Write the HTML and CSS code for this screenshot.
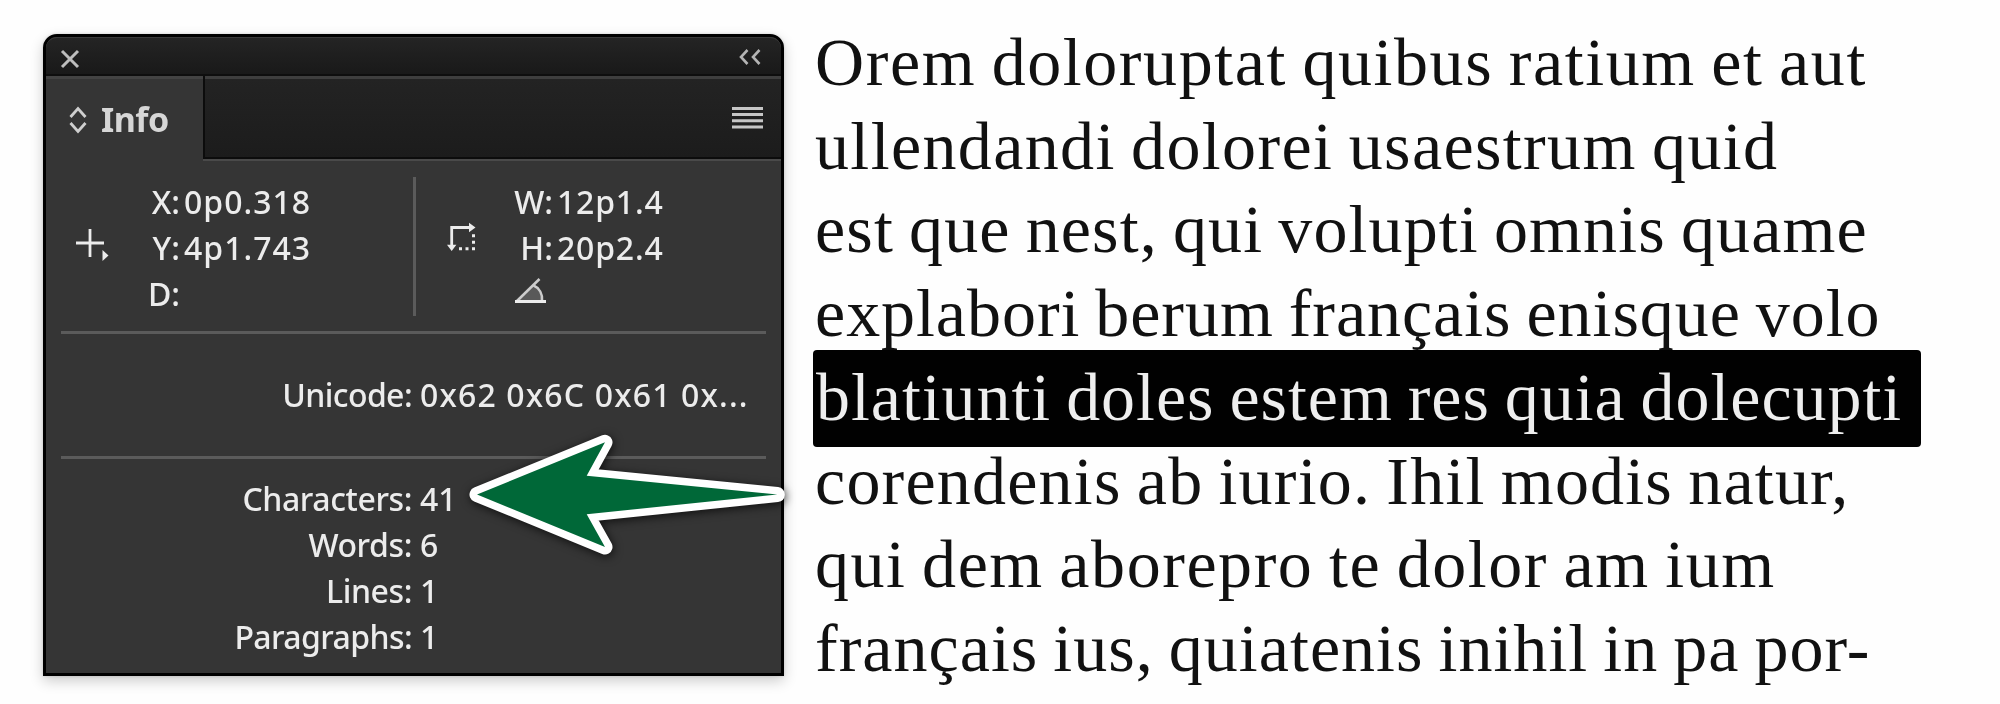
FILE: index.html
```html
<!DOCTYPE html>
<html lang="en">
<head>
<meta charset="utf-8">
<title>Info panel</title>
<link rel="stylesheet" href="styles.css">
</head>
<body>
<main class="page">
  <section class="panel">
    <header class="titlebar">
      <svg class="close" width="20" height="20" viewBox="0 0 20 20"><path d="M2 2 18 18M18 2 2 18"/></svg>
      <svg class="collapse" width="22" height="16" viewBox="0 0 22 16"><path d="M8.500 1 2 8 8.500 15M20.500 1 14 8 20.500 15"/></svg>
    </header>
    <nav class="tabs">
      <div class="tab">
        <svg class="updown" width="18" height="28" viewBox="0 0 18 28"><path d="M1.500 11 9 2.500 16.500 11M1.500 17 9 25.500 16.500 17"/></svg>
        <span>Info</span>
      </div>
      <div class="strip">
        <svg width="31" height="22" viewBox="0 0 31 22"><path d="M0 1.500H31M0 7.500H31M0 13.700H31M0 19.900H31"/></svg>
      </div>
    </nav>
    <div class="coords">
      <svg class="cross" width="34" height="34" viewBox="0 0 34 34"><path class="line" d="M15 1V29M1 15H29"/><path class="solid" d="M27.500 22 33.500 27.500 27.500 33Z"/></svg>
      <dl class="pos">
        <dt>X:</dt><dd>0p0.318</dd>
        <dt>Y:</dt><dd>4p1.743</dd>
        <dt>D:</dt><dd></dd>
      </dl>
      <i class="divider"></i>
      <svg class="extent" width="30" height="30" viewBox="0 0 30 30"><path class="line" d="M4.700 24V5.500H23"/><path class="solid" d="M22 .8 28.500 5.500 22 10.200ZM0 22.800 4.700 29 9.400 22.800Z"/><path class="solid" d="M25 12.300h3v3h-3zM25 18.800h3v3h-3zM25 25.200h3v3h-3zM18.500 25.200h3v3h-3zM12 25.200h3v3h-3z"/></svg>
      <dl class="size">
        <dt>W:</dt><dd>12p1.4</dd>
        <dt>H:</dt><dd>20p2.4</dd>
        <dt class="angle"><svg width="32" height="28" viewBox="0 0 32 28"><path class="wedge" d="M4 23.500 18 10C24 12 27 17 27 23.500Z"/><path class="arm" d="M2 24 24.500 2"/><path class="arc" d="M18.500 8.500C24.500 11 27.500 17 27 23.500"/><path class="base" d="M0 24.500H31"/></svg></dt><dd></dd>
      </dl>
    </div>
    <hr>
    <dl class="rows unicode">
      <dt class="t-unicode">Unicode:</dt><dd>0x62 0x6C 0x61 0x...</dd>
    </dl>
    <hr>
    <dl class="rows counts">
      <dt>Characters:</dt><dd>41</dd>
      <dt>Words:</dt><dd>6</dd>
      <dt>Lines:</dt><dd>1</dd>
      <dt class="t-para">Paragraphs:</dt><dd>1</dd>
    </dl>
    <svg class="pointer" width="340" height="140" viewBox="0 0 340 140"><path d="M17 69.500 145 17.300 126.700 50.700 317.300 69.500 126.700 89.300 145 122Z"/></svg>
  </section>
  <article class="copy">
    <p class="l1">Orem doloruptat quibus ratium et aut</p>
    <p class="l2">ullendandi dolorei usaestrum quid</p>
    <p class="l3">est que nest, qui volupti omnis quame</p>
    <p class="l4">explabori berum français enisque volo</p>
    <p class="l5">blatiunti doles estem res quia dolecupti</p>
    <p class="l6">corendenis ab iurio. Ihil modis natur,</p>
    <p class="l7">qui dem aborepro te dolor am ium</p>
    <p class="l8">français ius, quiatenis inihil in pa por-</p>
    <div class="selection"></div>
  </article>
</main>
</body>
</html>
```
FILE: styles.css
```css
* { box-sizing: border-box; }
html, body { margin: 0; background: #fefefe; }
body { height: 704px; overflow: hidden; }
p, dl, dd { margin: 0; }
svg { display: block; fill: none; flex: none; }

.page { display: flex; height: 704px; padding: 34px 0 0 43px; }

.panel {
  position: relative;
  flex: none;
  width: 741px;
  height: 642px;
  border: 3px solid #000;
  border-radius: 14px 14px 0 0;
  background: #353535;
  box-shadow: 0 5px 14px rgba(0, 0, 0, .2), 0 0 3px rgba(0, 0, 0, .15);
  color: #ececec;
  font: 500 32px/46px "Noto Sans", sans-serif;
}

.titlebar {
  display: flex;
  justify-content: space-between;
  height: 39px;
  padding: 11px 20px 0 14px;
  border-top: 1px solid #393939;
  border-bottom: 2px solid #0e0e0e;
  border-radius: 11px 11px 0 0;
  background: linear-gradient(#242424, #191919);
}
.close { stroke: #bdbdbd; stroke-width: 3; }
.collapse { stroke: #b4b4b4; stroke-width: 2.6; }

.tabs { display: flex; height: 85px; }
.tab {
  display: flex;
  width: 157px;
  padding: 27px 0 0 23px;
  border-top: 3px solid #434343;
  color: #d6d6d6;
  font-size: 34px;
  font-weight: 700;
  line-height: 34px;
  letter-spacing: -.5px;
}
.tab span { margin: -4px 0 0 14px; }
.updown { stroke: #cfcfcf; stroke-width: 2.8; }
.strip {
  display: flex;
  flex: 1;
  justify-content: flex-end;
  height: 83px;
  padding: 31px 18px 0 0;
  border: solid #0c0c0c;
  border-width: 0 0 2px 2px;
  background: linear-gradient(#3e3e3e 3px, #232323 3px, #1c1c1c);
  box-shadow: 0 2px #4a4a4a;
}
.strip svg { stroke: #c6c6c6; stroke-width: 3; }

.coords { display: flex; height: 170px; }
.cross { margin: 67px 0 0 29px; }
.line { stroke: #ececec; stroke-width: 2.8; }
.solid { fill: #ececec; }
.pos, .size { display: grid; grid-auto-rows: 46px; margin-top: 18px; }
.pos { width: 304px; grid-template-columns: 71px 1fr; }
.size { grid-template-columns: 76px 1fr; }
.coords dt, .rows dt { text-align: right; }
.coords dd { padding-left: 4px; letter-spacing: 1px; white-space: nowrap; }
.size dd { letter-spacing: .8px; }
.divider { width: 3px; height: 139px; margin-top: 16px; background: #5b5b5b; }
.extent { margin: 61px 0 0 31px; }
.angle { display: flex; padding: 6px 0 0 38px; }
.wedge { fill: #595959; }
.arm, .arc { stroke: #cccccc; stroke-width: 2.6; }
.base { stroke: #ececec; stroke-width: 3; }

hr { height: 3px; margin: 0 15px; border: 0; background: #5b5b5b; }
.rows { display: grid; grid-template-columns: 366px 1fr; grid-auto-rows: 46px; white-space: nowrap; }
.rows dt { letter-spacing: -.4px; }
.rows dd { padding-left: 8px; }
.unicode { height: 122px; padding-top: 38px; }
.rows .t-unicode { letter-spacing: -.6px; }
.unicode dd { letter-spacing: 1.15px; }
.counts { padding-top: 17px; }
.rows .t-para { letter-spacing: -.6px; }

/* callout arrow over the panel */
.pointer { position: absolute; left: 414px; top: 388px; overflow: visible; filter: drop-shadow(1px 2px 5px rgba(0, 0, 0, .7)); }
.pointer path { fill: #006838; stroke: #fff; stroke-width: 15; stroke-linejoin: round; paint-order: stroke; }

.copy {
  position: relative;
  flex: none;
  width: 1150px;
  margin: -13px 0 0 31px;
  color: #111;
  font: 68px/83.7px "Liberation Serif", serif;
  white-space: nowrap;
  word-spacing: -3px;
}
.l1 { letter-spacing: 1.57px; }
.l2 { letter-spacing: 1.37px; }
.l3 { letter-spacing: 1.12px; }
.l4 { letter-spacing: .95px; }
.l5 { padding-left: 1px; letter-spacing: .95px; }
.l6 { letter-spacing: 1.2px; }
.l7 { letter-spacing: 1.55px; }
.l8 { letter-spacing: 1.02px; }

/* inverts the selected line, including descenders that reach into it */
.selection {
  position: absolute;
  left: -2px;
  top: 329px;
  width: 1108px;
  height: 97px;
  border-radius: 4px;
  background: #fff;
  mix-blend-mode: difference;
}
```
